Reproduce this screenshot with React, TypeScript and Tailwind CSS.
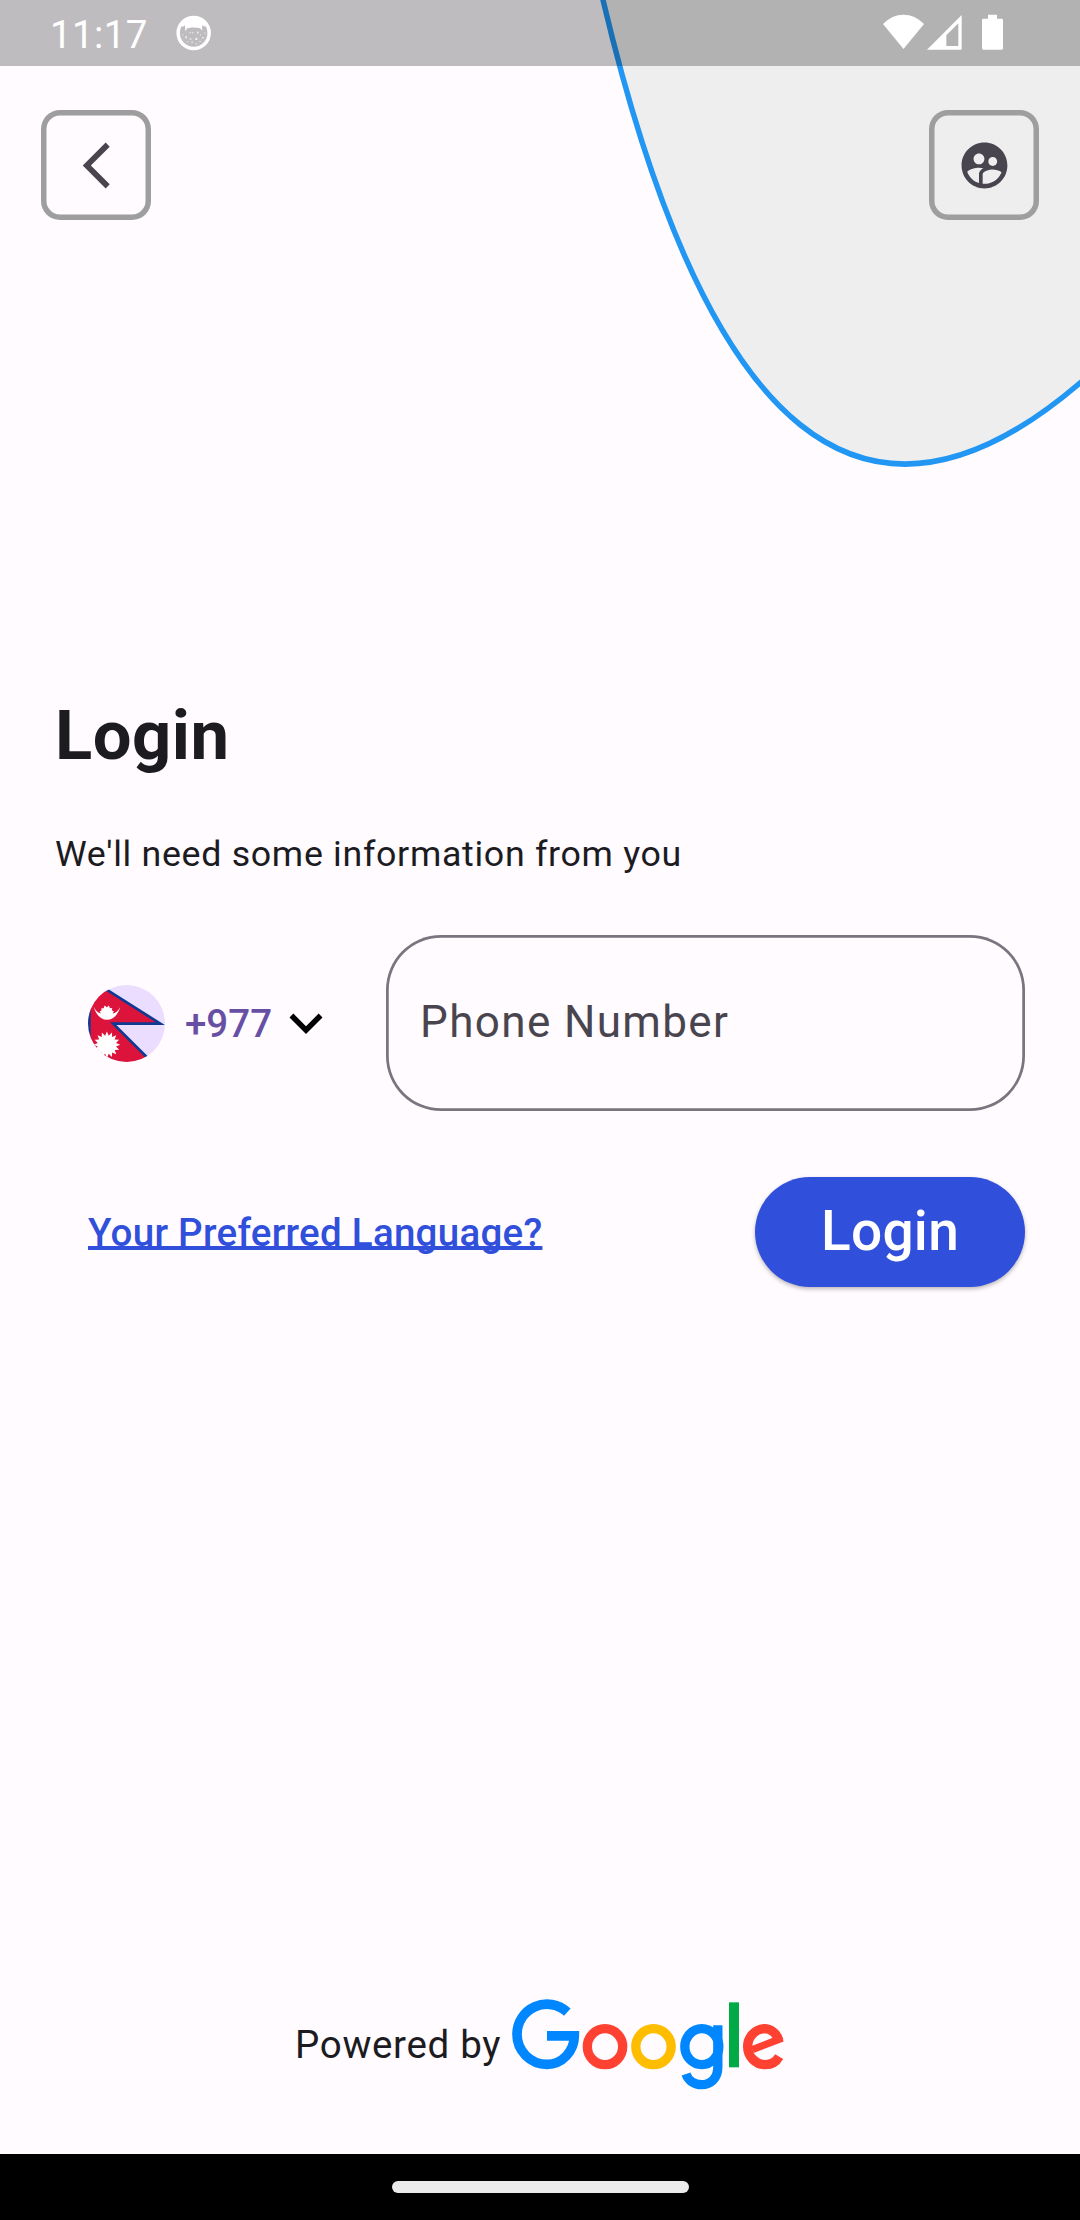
import { MdArrowBackIosNew, MdKeyboardArrowDown, MdSupervisedUserCircle } from "react-icons/md";

function BowlIcon() {
  return (
    <svg viewBox="527 46 106 108" className="ml-[27.800px] mt-[2px] h-9 w-[35.330px]">
      <circle cx="580" cy="100" r="46.5" fill="none" stroke="#fff" strokeWidth="10.5" />
      <path
        d="M543 66 C555 50 605 50 617 66 L613 81 L605 77 L606 93 L599 86 C590 83 570 83 561 86 L555 95 L554 77 L546 82 Z"
        fill="#fff"
      />
      <g fill="#fff" opacity="0.8">
        <rect x="555" y="110" width="5" height="6" />
        <rect x="568" y="116" width="5" height="4" />
        <rect x="585" y="115" width="6" height="6" />
        <rect x="575" y="98" width="4" height="3" />
        <rect x="590" y="96" width="5" height="5" />
        <rect x="568" y="97" width="3" height="4" />
        <rect x="605" y="112" width="5" height="4" />
        <rect x="558" y="126" width="6" height="2" />
        <rect x="573" y="126" width="5" height="3" />
        <rect x="586" y="131" width="4" height="3" />
        <rect x="597" y="124" width="4" height="3" />
        <rect x="599" y="104" width="3" height="3" />
        <rect x="546" y="104" width="3" height="3" />
        <rect x="612" y="99" width="3" height="3" />
      </g>
    </svg>
  );
}

function StatusIcons() {
  return (
    <svg viewBox="180 40 390 120" className="h-10 w-[130px]" fill="#fff">
      <path d="M189 73 Q216 45 250.500 45 Q285 45 312 73 L250.500 148 Z" />
      <path fillRule="evenodd" d="M425 46 V150 H321 Z M415 71 L379 107 V139 H415 Z" />
      <path d="M504 45 H531 V57 H545 Q549 57 549 61 V146 Q549 150 545 150 H490 Q486 150 486 146 V61 Q486 57 490 57 H504 Z" />
    </svg>
  );
}

function NepalFlag() {
  const rays = Array.from({ length: 16 }, (_, i) => {
    const a = (i * Math.PI) / 8;
    const b = a + Math.PI / 16;
    return `${141 + 40 * Math.cos(a)},${252 + 40 * Math.sin(a)} ${141 + 28 * Math.cos(b)},${252 + 28 * Math.sin(b)}`;
  }).join(" ");
  return (
    <svg viewBox="84 72 232 232" className="size-[77px] shrink-0 rounded-full bg-[#eaddff]">
      <g className="blur-[1.500px]">
        <path
          d="M88 53 L302 188.500 H160 L280 308 H88 Z"
          fill="#dc143c"
          stroke="#0f3a93"
          strokeWidth="8"
        />
        <path d="M101 137 C107 159 122 177 141 177 C161 177 175 160 181 138 C175 150 166 157 158 158 L162 151 L156 149 L157 141 L150 142 L147 134 L141 139 L134 134 L131 142 L124 142 L125 149 L119 151 L123 158 C114 156 106 149 101 137 Z" fill="#fff" />
        <polygon points={rays} fill="#fff" />
      </g>
    </svg>
  );
}

function GoogleLogo() {
  return (
    <svg
      viewBox="690 50 830 280"
      className="ml-[8.600px] h-[93.330px] w-[276.670px]"
      fill="none"
      strokeWidth="28"
      role="img"
      aria-label="Google"
    >
      <path
        d="M862 95.500 A90 90 0 0 0 711 162 A90 90 0 0 0 801 252 A82 86 0 0 0 883 166.500 H801"
        stroke="#0087ff"
        strokeWidth="29"
      />
      <ellipse cx="975" cy="199" rx="53" ry="54" stroke="#ff4131" />
      <ellipse cx="1120.500" cy="199" rx="53" ry="54" stroke="#ffbd00" />
      <ellipse cx="1265.500" cy="199" rx="51" ry="54" stroke="#0087ff" />
      <path d="M1313.500 135 V260 C1313.500 295 1291 313 1265 313 C1243 313 1225 301 1218 281" stroke="#0087ff" />
      <rect x="1347" y="66" width="30" height="195" fill="#00ab47" />
      <path
        d="M1497.500 229 C1489 244 1475 253 1456 253 A53 54 0 0 1 1403 199 A53 54 0 0 1 1452 145 C1472 145 1489 157 1497 181"
        stroke="#ff4131"
      />
      <path d="M1417 208 L1507 173" stroke="#ff4131" strokeWidth="22" />
    </svg>
  );
}

const squareButton =
  "flex size-[110px] items-center justify-center rounded-[19px] shadow-[inset_0_0_0_5.5px_#9e9e9e] text-[#49454f]";

export default function App() {
  return (
    <div className="relative flex h-[2220px] w-[1080px] flex-col overflow-hidden bg-[#fffbff] font-['Roboto',sans-serif] text-[#1c1b1f]">
      {/* Decorative curve behind the header */}
      <svg viewBox="0 0 1080 490" className="absolute left-0 top-0 h-[490px] w-[1080px]">
        <path d="M603 0 Q759 658 1080 383 V0 Z" fill="#eeeeee" />
        <path d="M601.600 -6 L603 0 Q759 658 1080 383 L1087 377" fill="none" stroke="#2196f3" strokeWidth="5.500" />
      </svg>

      <div className="relative flex h-[66px] shrink-0 items-start bg-black/25 pl-[50px] pr-[70px] pt-[13.300px] text-white">
        <span className="mt-[1.700px] text-[38.500px] leading-[40px] tracking-[0.400px]">11:17</span>
        <BowlIcon />
        <div className="ml-auto">
          <StatusIcons />
        </div>
      </div>

      <header className="relative mt-11 flex justify-between px-[41px]">
        <button className={squareButton} aria-label="Back">
          <MdArrowBackIosNew className="size-[55px]" />
        </button>
        <button className={squareButton} aria-label="Accounts">
          <MdSupervisedUserCircle className="size-[55px]" />
        </button>
      </header>

      <main className="mt-[476px] flex flex-col px-[55px]">
        <h1 className="text-[68.750px] font-bold leading-[80px] tracking-[0.500px]">Login</h1>
        <p className="mt-[58px] text-[35.750px] leading-[40px] tracking-[0.688px]">
          We'll need some information from you
        </p>

        <div className="mt-[61px] flex h-[176px] items-center">
          <div className="flex w-[331px] items-center pl-[33px]">
            <NepalFlag />
            <span className="ml-[20px] pt-[2px] text-[38.500px] font-medium leading-[46px] text-[#6750a4]">+977</span>
            <MdKeyboardArrowDown className="ml-px size-[66px] text-black" />
          </div>
          <div className="flex h-full w-[639px] items-center rounded-[55px] pb-[2px] pl-[34px] text-[44px] leading-[52px] tracking-[1.375px] text-[#49454f] shadow-[inset_0_0_0_2.75px_#79747e]">
            Phone Number
          </div>
        </div>

        <div className="mt-[66px] flex items-center justify-between pl-[33px]">
          <a className="pt-[2px] text-[38.500px] font-medium leading-[46px] tracking-[0.275px] text-[#304fdb] underline decoration-[4px] underline-offset-[0px] [text-decoration-skip-ink:none]">
            Your Preferred Language?
          </a>
          <button className="h-[110px] w-[270px] rounded-full bg-[#304fdb] pb-[2px] text-[55px] font-medium leading-[64px] tracking-[0.275px] text-white shadow-[0_2px_4px_rgba(0,0,0,0.28)]">
            Login
          </button>
        </div>
      </main>

      <footer className="mt-auto flex flex-col">
        <div className="mb-[64px] flex items-center pl-[295px]">
          <span className="mt-[3px] text-[38.500px] leading-[46px] tracking-[0.688px]">Powered by</span>
          <GoogleLogo />
        </div>
        <div className="flex h-[66px] items-start justify-center bg-black pt-[27px]">
          <div className="h-3 w-[297px] rounded-full bg-[#ebebeb]" />
        </div>
      </footer>
    </div>
  );
}
